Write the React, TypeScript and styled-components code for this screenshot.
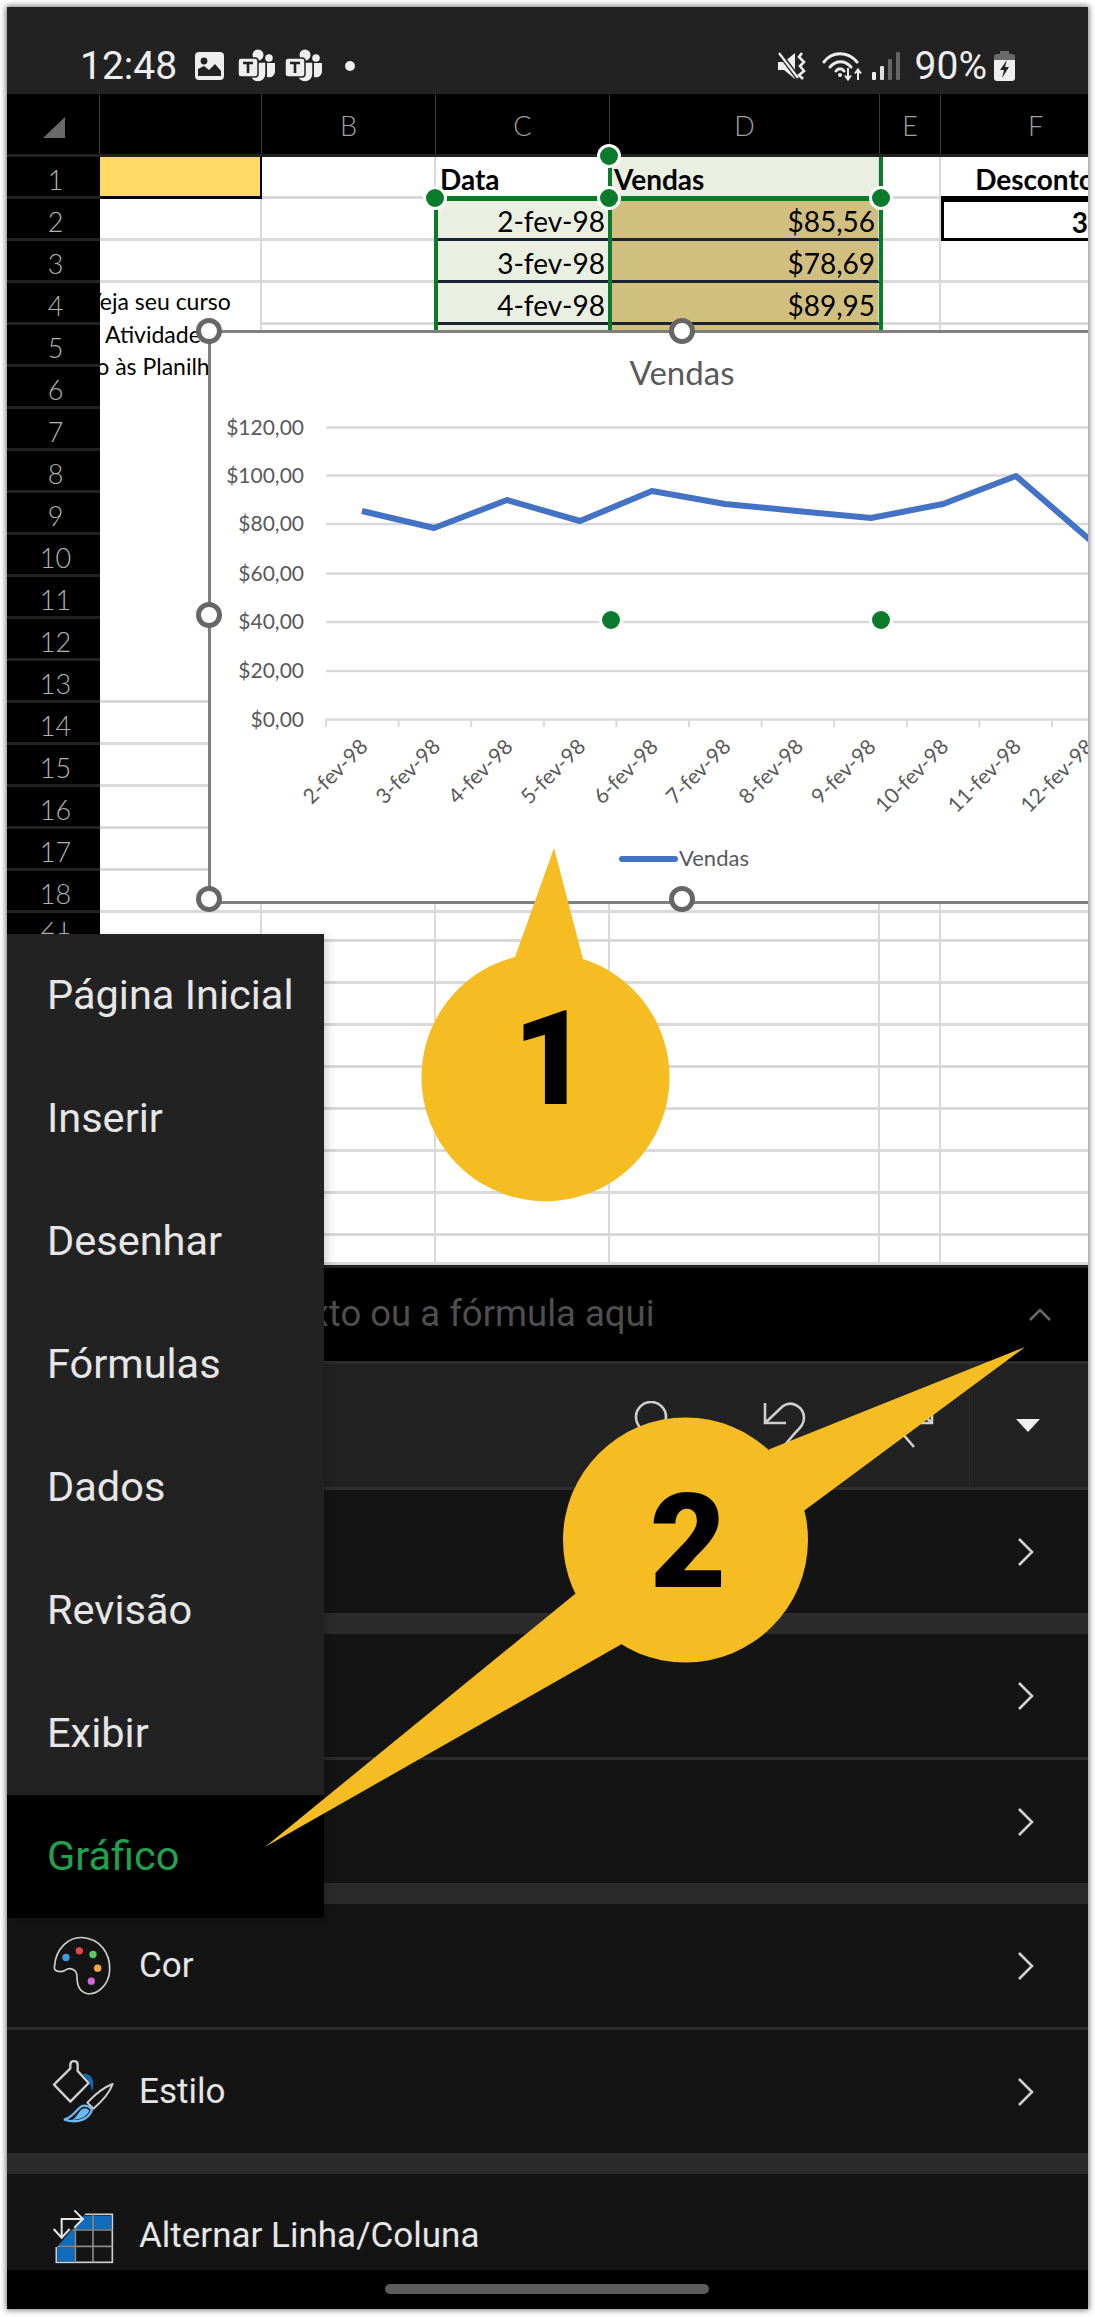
import React from "react";
import styled, { createGlobalStyle } from "styled-components";

const GlobalStyle = createGlobalStyle`
  html, body { margin: 0; padding: 0; background: #fff; }
  body { font-family: Roboto, "Liberation Sans", sans-serif; }
`;

const GREEN = "#0b7a2b";
const GRID = "#d9d9d9";
const COLUMNS = "93px 162px 174px 174px 270px 61px 190px";

/* ---------- frame ---------- */

const Frame = styled.div`
  position: relative;
  width: 1081px;
  height: 2302px;
  margin: 7px;
  display: flex;
  flex-direction: column;
  overflow: hidden;
  background: #000;
  box-shadow: 0 0 6px 1px rgba(0, 0, 0, 0.55);
`;

/* ---------- status bar ---------- */

const StatusBar = styled.div`
  flex: none;
  height: 87px;
  background: #222;
  color: #eee;
  display: flex;
  align-items: flex-end;
  padding: 0 73px 11px;
  box-sizing: border-box;
  font-size: 39px;
  line-height: 34px;
`;

const StatusGroup = styled.div<{ $right?: boolean }>`
  display: flex;
  align-items: center;
  margin-left: ${(p) => (p.$right ? "auto" : "0")};
  svg { display: block; flex: none; }
`;

const Clock = styled.span`
  margin-right: 18px;
`;

const Percent = styled.span`
  margin: 0 7px 0 15px;
`;

const IconGap = styled.span`
  width: 14px;
`;

const ImageIcon = () => (
  <svg width="29" height="28" viewBox="0 0 29 28">
    <rect width="29" height="28" rx="4" fill="#eee" />
    <circle cx="9" cy="9" r="3.4" fill="#222" />
    <path d="M3 22 L3 17 L9 14 L14 18 L20 12 L26 19 L26 24 L3 24 Z" fill="#222" />
  </svg>
);

const TeamsIcon = ({ gap }: { gap: number }) => (
  <svg width="37" height="34" viewBox="0 0 37 34" style={{ marginRight: gap }}>
    <circle cx="20" cy="6" r="5.5" fill="#eee" />
    <circle cx="31" cy="9" r="3.8" fill="#eee" />
    <path d="M29 14 H37 V22 A6 6 0 0 1 29 28 Z" fill="#eee" />
    <path d="M12 13 H28 V25 A8 8 0 0 1 12 25 Z" fill="#eee" stroke="#222" strokeWidth="1.5" />
    <rect x="0" y="9" width="20" height="19" rx="3" fill="#eee" stroke="#222" strokeWidth="1.5" />
    <path d="M5 14 H15 M10 14 V24" stroke="#222" strokeWidth="2.6" fill="none" />
  </svg>
);

const StatusDot = styled.span`
  width: 10px;
  height: 10px;
  border-radius: 50%;
  background: #eee;
  margin-left: 23px;
`;

const MuteIcon = () => (
  <svg width="29" height="28" viewBox="0 0 29 28" style={{ marginRight: 15 }}>
    <path d="M0 10 H6 L17 1 V27 L6 18 H0 Z" fill="#eee" />
    <path d="M2 2 L20 26" stroke="#222" strokeWidth="5" />
    <path d="M1 1 L20 26" stroke="#eee" strokeWidth="2.2" />
    <path d="M24 1 L21 5 L26 10 L22 14 L26 19 L21 23 L25 27" stroke="#eee" strokeWidth="2.6" fill="none" />
  </svg>
);

const WifiIcon = () => (
  <svg width="41" height="30" viewBox="0 0 41 30" style={{ marginRight: 9 }}>
    <g fill="none" stroke="#eee" strokeWidth="3" strokeLinecap="round">
      <path d="M2 11 C10 0 26 0 35 11" />
      <path d="M8 16 C14 9 23 9 29 16" />
      <path d="M14 20 C16 17 20 17 22 20" />
    </g>
    <circle cx="18" cy="24" r="2" fill="#eee" />
    <path d="M26 17 V28 M23 24.5 L26 28.5 L29 24.5 M36 29 V19 M33 22.5 L36 18.5 L39 22.5" stroke="#eee" strokeWidth="2" fill="none" />
  </svg>
);

const SignalIcon = () => (
  <svg width="28" height="28" viewBox="0 0 28 28">
    <rect x="0" y="20" width="4" height="8" rx="1" fill="#eee" />
    <rect x="8" y="14" width="4" height="14" rx="1" fill="#ddd" />
    <rect x="16" y="7" width="4" height="21" rx="1" fill="#666" />
    <rect x="24" y="0" width="4" height="28" rx="1" fill="#666" />
  </svg>
);

const BatteryIcon = () => (
  <svg width="21" height="30" viewBox="0 0 21 30">
    <path d="M6 0 H15 V3 H18 A3 3 0 0 1 21 6 V9 H0 V6 A3 3 0 0 1 3 3 H6 Z" fill="#6a6a6a" />
    <path d="M0 9 H21 V27 A3 3 0 0 1 18 30 H3 A3 3 0 0 1 0 27 Z" fill="#eee" />
    <path d="M13 9 L6 19 H10 L8 27 L15 16 H11 Z" fill="#222" />
  </svg>
);

/* ---------- column header ---------- */

const ColumnHeader = styled.div`
  flex: none;
  height: 63px;
  display: grid;
  grid-template-columns: ${COLUMNS};
  background: #000;
  border-bottom: 3px solid #222;
  box-sizing: border-box;
`;

const ColumnLabel = styled.div`
  display: flex;
  align-items: center;
  justify-content: center;
  padding-top: 3px;
  border-right: 1px solid #3a3a3a;
  color: #a0a0a0;
  font: 300 27px Lato, sans-serif;
`;

const CornerCell = styled.div`
  border-right: 1px solid #3a3a3a;
  padding: 23px 0 0 36px;
`;

const Corner = styled.div`
  width: 0;
  height: 0;
  border-left: 22px solid transparent;
  border-bottom: 21px solid #6a6a6a;
`;

/* ---------- sheet ---------- */

const Sheet = styled.div`
  position: relative;
  flex: none;
  height: 1108px;
  background: #fff;
`;

const SheetGrid = styled.div<{ $rows: string }>`
  display: grid;
  grid-template-columns: ${COLUMNS};
  grid-template-rows: ${(p) => p.$rows};
  overflow: hidden;
`;

const RowLabel = styled.div<{ $clipped?: boolean }>`
  display: flex;
  align-items: ${(p) => (p.$clipped ? "flex-start" : "center")};
  justify-content: center;
  background: #000;
  border-bottom: 3px solid #222;
  color: #b4b4b4;
  font: 300 27px/26px Lato, sans-serif;
  overflow: hidden;
  padding: ${(p) => (p.$clipped ? "9px" : "6px")} 0 0 4px;
  box-sizing: border-box;
`;

const RowLabelSliver = styled.span`
  height: 15px;
  display: flex;
  align-items: flex-end;
  overflow: hidden;
`;

const Cell = styled.div<{
  $fill?: string;
  $rule?: string;
  $edge?: string;
  $align?: string;
  $bold?: boolean;
  $inset?: number;
}>`
  display: flex;
  align-items: center;
  justify-content: ${(p) => p.$align ?? "flex-start"};
  box-sizing: border-box;
  min-width: 0;
  padding: 4px ${(p) => p.$inset ?? 3}px 0;
  background: ${(p) => p.$fill ?? "#fff"};
  border-bottom: 3px solid ${(p) => p.$rule ?? GRID};
  border-right: 2px solid ${(p) => p.$edge ?? GRID};
  color: #000;
  font: ${(p) => (p.$bold ? 700 : 400)} 28px Lato, sans-serif;
  white-space: nowrap;
`;

const BoxedCell = styled(Cell)`
  border: 3px solid #000;
  border-right: 0;
`;

const MergedNote = styled.div`
  grid-row: span 9;
  overflow: hidden;
  padding-top: 2px;
  background: #fff;
  border-right: 2px solid ${GRID};
  font: 400 23px/32.5px Lato, sans-serif;
  color: #000;
  white-space: nowrap;
`;

const NoteLine = styled.div<{ $shift: number }>`
  margin-left: ${(p) => p.$shift}px;
`;

const RangeLine = styled.div<{ $x: number; $y: number; $w: number; $h: number }>`
  position: absolute;
  left: ${(p) => p.$x}px;
  top: ${(p) => p.$y}px;
  width: ${(p) => p.$w}px;
  height: ${(p) => p.$h}px;
  background: ${GREEN};
`;

const RangeHandle = styled.div<{ $x: number; $y: number }>`
  position: absolute;
  left: ${(p) => p.$x - 12}px;
  top: ${(p) => p.$y - 12}px;
  width: 18px;
  height: 18px;
  border: 3px solid #fff;
  border-radius: 50%;
  background: ${GREEN};
`;

const ChartHandle = styled.div<{ $x: number; $y: number }>`
  position: absolute;
  left: ${(p) => p.$x - 13}px;
  top: ${(p) => p.$y - 13}px;
  width: 16px;
  height: 16px;
  border: 5px solid #666;
  border-radius: 50%;
  background: #fff;
`;

const ChartBox = styled.div`
  position: absolute;
  left: 201px;
  top: 173px;
  right: -10px;
  height: 568px;
  border: 3px solid #7f7f7f;
  background: #fff;
  overflow: hidden;
  svg { display: block; }
`;

const ChartText = styled.text`
  font-family: Lato, sans-serif;
  fill: #595959;
`;

const GRID_Y = [428.5, 476.5, 525, 574.5, 623, 672, 720.5];
const AXIS_LABELS = ["$120,00", "$100,00", "$80,00", "$60,00", "$40,00", "$20,00", "$0,00"];
const DATES = ["2-fev-98", "3-fev-98", "4-fev-98", "5-fev-98", "6-fev-98", "7-fev-98", "8-fev-98", "9-fev-98", "10-fev-98", "11-fev-98", "12-fev-98"];
const LINE = "362,512 434,529 507,501 580,522 652,492 725,505 797,512 871,519 943,505 1016,477 1090,541";

const VendasChart = () => (
  <svg width="900" height="562" viewBox="211 334 900 562">
    <ChartText x="682" y="386" fontSize="33" textAnchor="middle">Vendas</ChartText>
    {GRID_Y.map((y, i) => (
      <g key={y}>
        <line x1="326" x2="1100" y1={y} y2={y} stroke={GRID} strokeWidth="2.5" />
        <ChartText x="304" y={y + 7} fontSize="21" textAnchor="end">{AXIS_LABELS[i]}</ChartText>
      </g>
    ))}
    {Array.from({ length: 12 }, (_, i) => (
      <line key={i} x1={326 + 72.6 * i} x2={326 + 72.6 * i} y1="720" y2="728" stroke={GRID} strokeWidth="2" />
    ))}
    <polyline points={LINE} fill="none" stroke="#4472c4" strokeWidth="6" strokeLinejoin="round" />
    {DATES.map((d, i) => {
      const x = 369 + 72.6 * i;
      return (
        <ChartText key={d} x={x} y="749" fontSize="21" textAnchor="end" transform={`rotate(-45 ${x} 749)`}>{d}</ChartText>
      );
    })}
    <line x1="622" x2="675" y1="860" y2="860" stroke="#4472c4" strokeWidth="6" strokeLinecap="round" />
    <ChartText x="679" y="867" fontSize="22">Vendas</ChartText>
  </svg>
);

/* ---------- formula bar and toolbar ---------- */

const FormulaBar = styled.div`
  flex: none;
  height: 96px;
  box-sizing: border-box;
  display: flex;
  align-items: center;
  justify-content: space-between;
  padding: 0 37px 3px 140px;
  background: #000;
  border-top: 3px solid #222;
  color: #4f4f4f;
  font-size: 36.5px;
  svg { display: block; margin-top: 3px; }
`;

const Toolbar = styled.div`
  flex: none;
  height: 129px;
  box-sizing: border-box;
  display: flex;
  justify-content: flex-end;
  gap: 17px;
  background: #222;
  border-top: 3px solid #2e2e2e;
  border-bottom: 3px solid #2e2e2e;
`;

const ToolButton = styled.div`
  width: 112px;
  display: flex;
  justify-content: center;
  padding-top: 37px;
  svg { display: block; }
`;

const DropCell = styled.div`
  width: 118px;
  margin-left: -17px;
  display: flex;
  align-items: center;
  justify-content: center;
  border-left: 1px solid #2a2a2a;
`;

const DropArrow = styled.div`
  width: 0;
  height: 0;
  margin-right: 2px;
  border-left: 12px solid transparent;
  border-right: 12px solid transparent;
  border-top: 13px solid #f0f0f0;
`;

const UndoIcon = ({ flip }: { flip?: boolean }) => (
  <svg width="44" height="48" viewBox="0 0 44 48" style={flip ? { transform: "scaleX(-1)" } : undefined}>
    <path
      d="M3 2 V22 H24 M3 22 L21 5 C30 -1 42 6 42 17 C42 23 38 27 34 31 L21 46"
      fill="none"
      stroke="#cfcfcf"
      strokeWidth="2.6"
    />
  </svg>
);

/* ---------- list ---------- */

const List = styled.div`
  flex: 1;
  min-height: 0;
  overflow: hidden;
  background: #141414;
`;

const ListRow = styled.div<{ $end?: "band" | "line" }>`
  height: ${(p) => (p.$end === "band" ? 144 : p.$end === "line" ? 126 : 123)}px;
  box-sizing: border-box;
  display: flex;
  align-items: center;
  padding: 0 54px 0 45px;
  border-bottom: ${(p) =>
    p.$end === "band" ? "21px solid #2b2b2b" : p.$end === "line" ? "3px solid #2b2b2b" : "0"};
  color: #e6e6e6;
  font-size: 35px;
`;

const RowIcon = styled.div`
  width: 87px;
  flex: none;
  svg { display: block; }
`;

const RowText = styled.span`
  flex: 1;
`;

const ChevronRight = () => (
  <svg width="17" height="28" viewBox="0 0 17 28">
    <path d="M2 1 L15 14 L2 27" fill="none" stroke="#d0d0d0" strokeWidth="2.6" />
  </svg>
);

const PaletteIcon = () => (
  <svg width="60" height="62" viewBox="60 45 180 185">
    <path
      d="M68 135 C72 85 110 50 150 52 C205 55 235 100 233 150 C231 195 195 225 165 220 C140 215 135 190 135 170 C135 148 115 140 100 150 C85 158 62 155 68 135 Z"
      fill="none"
      stroke="#d0d0d0"
      strokeWidth="5"
    />
    <circle cx="102" cy="112" r="11" fill="#3b9be0" />
    <circle cx="142" cy="92" r="11" fill="#e54848" />
    <circle cx="183" cy="103" r="11" fill="#5cc665" />
    <circle cx="197" cy="144" r="11" fill="#f5a742" />
    <circle cx="178" cy="183" r="11" fill="#d566d9" />
  </svg>
);

const StyleIcon = () => (
  <svg width="62" height="64" viewBox="60 418 186 192">
    <path
      d="M66 492 L115 443 V432 C115 418 137 418 137 432 V451 L170 487 L115 543 Z"
      fill="none"
      stroke="#d0d0d0"
      strokeWidth="7"
      strokeLinejoin="round"
    />
    <path d="M152 461 C176 456 192 478 180 514 C178 495 172 478 152 461 Z" fill="#0f6cbd" />
    <path d="M166 546 C190 520 215 500 242 490 C232 518 210 542 184 564 Z" fill="none" stroke="#d0d0d0" strokeWidth="6" strokeLinejoin="round" />
    <path d="M148 557 C160 552 170 556 180 566 C174 592 140 612 96 596 C122 592 130 570 148 557 Z" fill="none" stroke="#6db8f2" strokeWidth="7" />
    <path d="M150 565 C160 560 168 564 172 570 C166 586 146 598 120 597 C134 590 140 574 150 565 Z" fill="#6db8f2" />
  </svg>
);

const SwitchIcon = () => (
  <svg width="62" height="58" viewBox="55 850 186 170">
    <rect x="68" y="870" width="168" height="144" fill="none" stroke="#cfcfcf" strokeWidth="5" />
    <rect x="178" y="875" width="55" height="40" fill="#0f6cbd" />
    <rect x="125" y="875" width="50" height="40" fill="#0f6cbd" />
    <rect x="71" y="920" width="52" height="44" fill="#0f6cbd" />
    <rect x="71" y="969" width="52" height="42" fill="#0f6cbd" />
    <path d="M125 868 V1014 M178 868 V1014 M68 917 H236 M68 966 H236" stroke="#8a8a8a" strokeWidth="5" />
    <path d="M55 850 H170 L70 968 H55 Z" fill="#141414" />
    <path d="M84 935 V884 H146 M122 858 L148 884 L122 910 M60 914 L84 940 L108 914" fill="none" stroke="#e6e6e6" strokeWidth="6" />
  </svg>
);

const NavBar = styled.div`
  flex: none;
  height: 39px;
  background: #000;
  display: flex;
  justify-content: center;
  padding-top: 14px;
  box-sizing: border-box;
`;

const NavPill = styled.div`
  width: 324px;
  height: 10px;
  margin-right: 1px;
  border-radius: 5px;
  background: #5c5c5c;
`;

/* ---------- tab menu ---------- */

const TabMenu = styled.div`
  position: absolute;
  left: 0;
  top: 927px;
  width: 317px;
  background: #222;
  box-shadow: 3px 3px 10px rgba(0, 0, 0, 0.18);
`;

const TabItem = styled.div<{ $active?: boolean }>`
  height: 123px;
  display: flex;
  align-items: center;
  padding: 0 0 2px 40px;
  box-sizing: border-box;
  background: ${(p) => (p.$active ? "#000" : "transparent")};
  color: ${(p) => (p.$active ? "#21a04e" : "#e6e6e6")};
  font-size: 41.5px;
  white-space: nowrap;
`;

/* ---------- callouts ---------- */

const CalloutLayer = styled.svg`
  position: absolute;
  left: 0;
  top: 0;
  pointer-events: none;
`;

const CalloutNumber = styled.text`
  font-family: Roboto, "Liberation Sans", sans-serif;
  font-weight: 900;
  font-size: 132px;
  fill: #000;
  text-anchor: middle;
`;

/* ---------- data ---------- */

const ROW_HEIGHTS = [...Array(18).fill("42px"), "29px", ...Array(7).fill("42px"), "29px"].join(" ");
const ROW_LABELS = [...Array.from({ length: 18 }, (_, i) => i + 1), 21, 22, 23, 24, 25, 26, 27, 28, 29];
const SALES = [
  ["2-fev-98", "$85,56"],
  ["3-fev-98", "$78,69"],
  ["4-fev-98", "$89,95"],
];
const TABS = ["Página Inicial", "Inserir", "Desenhar", "Fórmulas", "Dados", "Revisão", "Exibir", "Gráfico"];
const SOFT_GREEN = "#e9f0e2";
const TAN = "#d1bf80";
const DARK_RULE = "#1a2233";

function sheetRow(label: number) {
  const head =
    label === 21 ? (
      <RowLabel key="h21" $clipped>
        <RowLabelSliver>21</RowLabelSliver>
      </RowLabel>
    ) : (
      <RowLabel key={`h${label}`}>{label}</RowLabel>
    );
  const plain = (col: string) => <Cell key={`${label}${col}`} />;

  if (label === 1) {
    return [
      head,
      <Cell key="a1" $fill="#ffd966" $rule="#000" $edge="#000" />,
      plain("b"),
      <Cell key="c1" $bold $inset={4}>Data</Cell>,
      <Cell key="d1" $fill={SOFT_GREEN} $bold $inset={4}>Vendas</Cell>,
      plain("e"),
      <Cell key="f1" $bold $align="center" $rule="#000">Desconto</Cell>,
    ];
  }
  if (label >= 2 && label <= 4) {
    const [date, value] = SALES[label - 2];
    return [
      head,
      label === 4 ? (
        <MergedNote key="note">
          <NoteLine $shift={-14}>Veja seu curso</NoteLine>
          <NoteLine $shift={5}>Atividade</NoteLine>
          <NoteLine $shift={-100}>Introdução às Planilhas</NoteLine>
        </MergedNote>
      ) : (
        plain("a")
      ),
      plain("b"),
      <Cell key={`c${label}`} $fill={SOFT_GREEN} $rule={DARK_RULE} $align="flex-end">{date}</Cell>,
      <Cell key={`d${label}`} $fill={TAN} $rule={DARK_RULE} $align="flex-end">{value}</Cell>,
      plain("e"),
      label === 2 ? <BoxedCell key="f2" $bold $align="flex-end" $inset={20}>3%</BoxedCell> : plain("f"),
    ];
  }
  const merged = label >= 5 && label <= 12;
  return [
    head,
    merged ? null : plain("a"),
    plain("b"),
    <Cell key={`c${label}`} $fill={label === 5 ? SOFT_GREEN : undefined} />,
    <Cell key={`d${label}`} $fill={label === 5 ? TAN : undefined} />,
    plain("e"),
    plain("f"),
  ];
}

export default function App() {
  return (
    <>
      <GlobalStyle />
      <Frame>
        <StatusBar>
          <StatusGroup>
            <Clock>12:48</Clock>
            <ImageIcon />
            <IconGap />
            <TeamsIcon gap={10} />
            <TeamsIcon gap={0} />
            <StatusDot />
          </StatusGroup>
          <StatusGroup $right>
            <MuteIcon />
            <WifiIcon />
            <SignalIcon />
            <Percent>90%</Percent>
            <BatteryIcon />
          </StatusGroup>
        </StatusBar>

        <ColumnHeader>
          <CornerCell>
            <Corner />
          </CornerCell>
          <ColumnLabel />
          {["B", "C", "D", "E", "F"].map((c) => (
            <ColumnLabel key={c}>{c}</ColumnLabel>
          ))}
        </ColumnHeader>

        <Sheet>
          <SheetGrid $rows={ROW_HEIGHTS}>{ROW_LABELS.map((label) => sheetRow(label))}</SheetGrid>

          <RangeLine $x={427} $y={39} $w={448} $h={5} />
          <RangeLine $x={427} $y={41} $w={4} $h={135} />
          <RangeLine $x={601} $y={0} $w={4} $h={176} />
          <RangeLine $x={872} $y={0} $w={4} $h={176} />

          <ChartBox>
            <VendasChart />
          </ChartBox>

          <RangeHandle $x={602} $y={-1} />
          <RangeHandle $x={428} $y={41} />
          <RangeHandle $x={602} $y={41} />
          <RangeHandle $x={874} $y={41} />
          <RangeHandle $x={604} $y={463} />
          <RangeHandle $x={874} $y={463} />

          <ChartHandle $x={202} $y={174} />
          <ChartHandle $x={675} $y={174} />
          <ChartHandle $x={202} $y={458} />
          <ChartHandle $x={202} $y={742} />
          <ChartHandle $x={675} $y={742} />
        </Sheet>

        <FormulaBar>
          <span>Digite o texto ou a fórmula aqui</span>
          <svg width="22" height="13" viewBox="0 0 22 13">
            <path d="M1 12 L11 2 L21 12" fill="none" stroke="#6a6a6a" strokeWidth="2.5" />
          </svg>
        </FormulaBar>

        <Toolbar>
          <ToolButton>
            <svg width="48" height="48" viewBox="0 0 48 48">
              <circle cx="20" cy="16" r="15" fill="none" stroke="#cfcfcf" strokeWidth="2.6" />
              <path d="M30 27 L46 46" stroke="#cfcfcf" strokeWidth="2.6" />
            </svg>
          </ToolButton>
          <ToolButton>
            <UndoIcon />
          </ToolButton>
          <ToolButton>
            <UndoIcon flip />
          </ToolButton>
          <DropCell>
            <DropArrow />
          </DropCell>
        </Toolbar>

        <List>
          <ListRow $end="band">
            <RowText />
            <ChevronRight />
          </ListRow>
          <ListRow $end="line">
            <RowText />
            <ChevronRight />
          </ListRow>
          <ListRow $end="band">
            <RowText />
            <ChevronRight />
          </ListRow>
          <ListRow $end="line">
            <RowIcon>
              <PaletteIcon />
            </RowIcon>
            <RowText>Cor</RowText>
            <ChevronRight />
          </ListRow>
          <ListRow $end="band">
            <RowIcon>
              <StyleIcon />
            </RowIcon>
            <RowText>Estilo</RowText>
            <ChevronRight />
          </ListRow>
          <ListRow>
            <RowIcon>
              <SwitchIcon />
            </RowIcon>
            <RowText>Alternar Linha/Coluna</RowText>
          </ListRow>
        </List>

        <NavBar>
          <NavPill />
        </NavBar>

        <TabMenu>
          {TABS.map((t) => (
            <TabItem key={t} $active={t === "Gráfico"}>{t}</TabItem>
          ))}
        </TabMenu>

        <CalloutLayer width="1081" height="2302" viewBox="7 7 1081 2302">
          <path d="M554 848 L583 959 A124 124 0 1 1 515 957 Z" fill="#f5bd22" />
          <CalloutNumber x="551" y="1104">1</CalloutNumber>
          <path d="M1025 1347 L770 1449 L575 1594 L265 1847 L620 1645 L805 1510 Z" fill="#f5bd22" />
          <circle cx="685.5" cy="1540" r="122.5" fill="#f5bd22" />
          <CalloutNumber x="688" y="1587">2</CalloutNumber>
        </CalloutLayer>
      </Frame>
    </>
  );
}
